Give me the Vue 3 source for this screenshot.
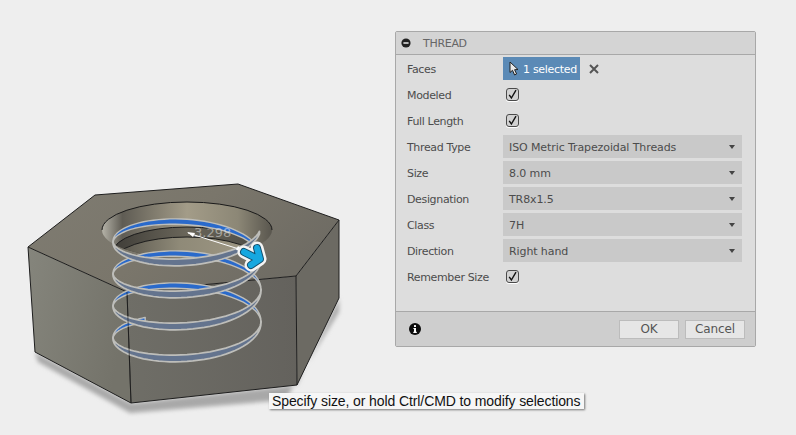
<template>
  <div class="page">
    <svg class="viewport" width="796" height="435" viewBox="0 0 796 435">
      <defs>
        <filter id="soft" x="-20%" y="-20%" width="140%" height="140%">
          <feGaussianBlur stdDeviation="2" />
        </filter>
        <linearGradient id="topFace" x1="0" y1="0" x2="1" y2="0.4">
          <stop offset="0" stop-color="#7f7c72" />
          <stop offset="0.55" stop-color="#7a766b" />
          <stop offset="1" stop-color="#6f6c64" />
        </linearGradient>
        <linearGradient id="leftFace" x1="0" y1="0" x2="1" y2="0.3">
          <stop offset="0" stop-color="#85857c" />
          <stop offset="1" stop-color="#74736a" />
        </linearGradient>
        <linearGradient id="frontFace" x1="0" y1="0" x2="1" y2="0">
          <stop offset="0" stop-color="#6f6e67" />
          <stop offset="1" stop-color="#64625d" />
        </linearGradient>
        <linearGradient id="holeWall" x1="0" y1="0" x2="1" y2="0">
          <stop offset="0" stop-color="#b5b3a8" />
          <stop offset="0.12" stop-color="#5f5c54" />
          <stop offset="0.5" stop-color="#a39c88" />
          <stop offset="0.8" stop-color="#8c8776" />
          <stop offset="1" stop-color="#59564e" />
        </linearGradient>
        <linearGradient id="holeDark" x1="0" y1="0" x2="1" y2="0">
          <stop offset="0" stop-color="#3f3d38" />
          <stop offset="0.5" stop-color="#6a665a" />
          <stop offset="1" stop-color="#4c4a44" />
        </linearGradient>
        <linearGradient id="holeLow" x1="0" y1="0" x2="1" y2="0">
          <stop offset="0" stop-color="#55524a" />
          <stop offset="0.45" stop-color="#8f8a78" />
          <stop offset="1" stop-color="#a09985" />
        </linearGradient>
        <clipPath id="holeClip">
          <ellipse cx="187" cy="230" rx="85" ry="28" />
        </clipPath>
      </defs>

      <path
        d="M35 352 L38 362 L130 413 L285 400 L339 312 L339 298 L297 385 L131 403 Z"
        fill="#a8a8a8"
        filter="url(#soft)"
      />

      <polygon
        points="28,247 95,195 238,184 339,220 296,276 127,292"
        fill="url(#topFace)"
      />
      <polygon points="28,247 127,292 131,403 35,352" fill="url(#leftFace)" />
      <polygon points="127,292 296,276 297,385 131,403" fill="url(#frontFace)" />
      <polygon points="296,276 339,220 339,298 297,385" fill="#6c6a63" />

      <ellipse cx="187" cy="230" rx="85" ry="28" fill="url(#holeWall)" />
      <g clip-path="url(#holeClip)">
        <ellipse cx="187" cy="252" rx="74" ry="25" fill="url(#holeDark)" stroke="#1c1c1c" />
        <ellipse cx="187" cy="262" rx="74" ry="25" fill="url(#holeLow)" stroke="#1c1c1c" />
      </g>
      <path
        d="M102 230 A85 28 0 0 1 272 230"
        fill="none"
        stroke="#1a1a1a"
      />

      <g fill="none" stroke="#1e1e1e" stroke-width="1" stroke-linejoin="round">
        <path d="M28 247 L95 195 L238 184 L339 220 L339 298 L297 385 L131 403 L35 352 Z" />
        <path d="M28 247 L127 292 L296 276 L339 220" />
        <path d="M127 292 L131 403 M296 276 L297 385" />
      </g>

      <polygon
        v-for="(part, i) in ribbonBack"
        :key="'b' + i"
        :points="part"
        class="ribbon-back"
      />
      <polygon
        v-for="(part, i) in ribbonFront"
        :key="'f' + i"
        :points="part"
        class="ribbon-front"
      />

      <path d="M127 292 L131 403" stroke="#1e1e1e" stroke-opacity="0.6" fill="none" />

      <text x="194" y="237" class="dimension">3.298</text>
      <path d="M188 233 L242 250" stroke="#fff" stroke-width="1" fill="none" />
      <path d="M187 232 L195 233 L193 237 Z M244 251 L236 250 L238 246 Z" fill="#fff" />

      <g fill="none" stroke-linecap="round" stroke-linejoin="round">
        <path d="M244 252 L256 258 M257 248 L260 259 L251 265" stroke="#f4f4f4" stroke-width="13" />
        <path d="M244 252 L256 258 M257 248 L260 259 L251 265" stroke="#14506e" stroke-width="8" />
        <path d="M244 252 L256 258 M257 248 L260 259 L251 265" stroke="#16a8e0" stroke-width="6" />
      </g>
    </svg>

    <div class="dialog">
      <div class="dialog-header">
        <svg width="10" height="10" viewBox="0 0 10 10">
          <circle cx="5" cy="5" r="4.6" fill="#222" />
          <rect x="2.4" y="4.2" width="5.2" height="1.6" fill="#ddd" />
        </svg>
        <span>THREAD</span>
      </div>

      <div class="dialog-body">
        <div class="row">
          <label>Faces</label>
          <div class="selected">
            <svg width="10" height="15" viewBox="0 0 10 15">
              <path
                d="M1 1 L1 11.5 L3.5 9.3 L5.6 14 L7.6 13 L5.6 8.7 L9 8.5 Z"
                fill="#e8e8e8"
                stroke="#222"
                stroke-width="1"
              />
            </svg>
            <span>1 selected</span>
          </div>
          <svg class="clear" width="10" height="10" viewBox="0 0 10 10">
            <path d="M1 1 L9 9 M9 1 L1 9" stroke="#555" stroke-width="2" />
          </svg>
        </div>

        <template v-for="row in rows" :key="row.label">
          <div class="row">
            <label>{{ row.label }}</label>
            <div v-if="row.value" class="select">
              <span>{{ row.value }}</span>
              <i class="caret"></i>
            </div>
            <div v-else class="check">
              <svg width="11" height="11" viewBox="0 0 11 11">
                <path d="M2.2 5.8 L4.4 9 L9 1.2" fill="none" stroke="#111" stroke-width="1.4" />
              </svg>
            </div>
          </div>
        </template>
      </div>

      <div class="dialog-footer">
        <svg width="12" height="12" viewBox="0 0 12 12">
          <circle cx="6" cy="6" r="6" fill="#0c0c0c" />
          <rect x="5" y="2.1" width="2" height="1.9" fill="#fff" />
          <path d="M4.4 5 H7 V8.8 H7.8 V10 H4.3 V8.8 H5 V6.1 H4.4 Z" fill="#fff" />
        </svg>
        <div class="buttons">
          <button>OK</button>
          <button>Cancel</button>
        </div>
      </div>
    </div>

    <div class="tooltip">Specify size, or hold Ctrl/CMD to modify selections</div>
  </div>
</template>

<script setup>
const rows = [
  { label: "Modeled" },
  { label: "Full Length" },
  { label: "Thread Type", value: "ISO Metric Trapezoidal Threads" },
  { label: "Size", value: "8.0 mm" },
  { label: "Designation", value: "TR8x1.5" },
  { label: "Class", value: "7H" },
  { label: "Direction", value: "Right hand" },
  { label: "Remember Size" },
];

// helix of the thread preview
const cx = 187;
const rx = 74;
const ry = 28;
const cy = 226;
const pitch = 32;
const start = 0.2;
const end = 7 * Math.PI + 0.97;

const ribbon = (from, to, front) => {
  const upper = [];
  const lower = [];
  const steps = 40;
  for (let i = 0; i <= steps; i++) {
    const t = from + ((to - from) * i) / steps;
    const s = Math.abs(Math.sin(t));
    const h = front ? 0.8 + 2.6 * s : 0.8 + 1.9 * s;
    const x = (cx + rx * Math.cos(t)).toFixed(1);
    const y = cy + ry * Math.sin(t) + (pitch * t) / (2 * Math.PI);
    upper.push(`${x},${(y - h).toFixed(1)}`);
    lower.unshift(`${x},${(y + h).toFixed(1)}`);
  }
  return [...upper, ...lower].join(" ");
};

const ribbonFront = [];
const ribbonBack = [];
for (let k = 0; k < 4; k++) {
  const base = 2 * Math.PI * k;
  ribbonFront.push(ribbon(Math.max(base, start), base + Math.PI, true));
  ribbonBack.push(ribbon(base + Math.PI, Math.min(base + 2 * Math.PI, end), false));
}
</script>

<style scoped>
.page {
  position: relative;
  width: 796px;
  height: 435px;
  overflow: hidden;
  background: #eeeeee;
  font-family: "DejaVu Sans", sans-serif;
  font-size: 11px;
  color: #4c4c4c;
}

.viewport {
  position: absolute;
  left: 0;
  top: 0;
}

.ribbon-back {
  fill: #2a6acb;
  stroke: #bebeba;
  stroke-width: 1.4;
  stroke-linejoin: round;
}

.ribbon-front {
  fill: #64748e;
  stroke: #bebeba;
  stroke-width: 1.7;
  stroke-linejoin: round;
}

.dimension {
  font-family: "DejaVu Sans", sans-serif;
  font-size: 13px;
  fill: #ffffff;
  fill-opacity: 0.45;
}

.dialog {
  position: absolute;
  left: 395px;
  top: 31px;
  width: 361px;
  height: 316px;
  box-sizing: border-box;
  display: flex;
  flex-direction: column;
  background: #dddddd;
  border: 1px solid #a8a8a8;
  border-radius: 2px;
}

.dialog-header {
  height: 23px;
  box-sizing: border-box;
  flex: none;
  display: flex;
  align-items: center;
  gap: 12px;
  padding-left: 5px;
  letter-spacing: -0.3px;
  background: #d4d4d4;
  border-bottom: 1px solid #a8a8a8;
  color: #666;
}

.dialog-body {
  flex: 1;
  display: flex;
  flex-direction: column;
  gap: 3px;
  padding: 2px 13px 0 11px;
}

.row {
  height: 23px;
  display: flex;
  align-items: center;
}

.row label {
  width: 96px;
  flex: none;
  padding-top: 2px;
  letter-spacing: -0.35px;
}

.selected {
  width: 77px;
  height: 23px;
  box-sizing: border-box;
  display: flex;
  align-items: center;
  gap: 4px;
  padding-left: 6px;
  background: #5b8ab6;
  color: #fff;
  letter-spacing: -0.3px;
}

.selected span {
  padding-top: 2px;
}

.clear {
  margin-left: 9px;
}

.select {
  flex: 1;
  height: 23px;
  display: flex;
  align-items: center;
  justify-content: space-between;
  padding: 0 7px 0 6px;
  background: #c9c9c9;
  letter-spacing: -0.1px;
}

.select span {
  padding-top: 2px;
}

.caret {
  width: 0;
  height: 0;
  border-left: 3.5px solid transparent;
  border-right: 3.5px solid transparent;
  border-top: 4px solid #444;
}

.check {
  width: 13px;
  height: 13px;
  box-sizing: border-box;
  margin-left: 3px;
  display: flex;
  align-items: center;
  justify-content: center;
  background: #d2d2d2;
  border: 1px solid #4a4a4a;
  border-radius: 3px;
  box-shadow: 0 1px 0 #fff;
}

.dialog-footer {
  height: 35px;
  box-sizing: border-box;
  flex: none;
  display: flex;
  align-items: center;
  justify-content: space-between;
  padding: 0 10px 0 13px;
  background: #cecece;
  border-top: 1px solid #a8a8a8;
}

.buttons {
  display: flex;
  gap: 6px;
}

.buttons button {
  width: 60px;
  height: 19px;
  padding: 0;
  font-family: inherit;
  font-size: 12px;
  letter-spacing: -0.1px;
  color: #555;
  background: #e6e6e6;
  border: 1px solid #bcbcbc;
}

.tooltip {
  position: absolute;
  left: 269px;
  top: 393px;
  width: 315px;
  height: 16px;
  box-sizing: border-box;
  padding-left: 3px;
  font-family: "Liberation Sans", sans-serif;
  font-size: 14px;
  letter-spacing: -0.1px;
  line-height: 16px;
  color: #111;
  white-space: nowrap;
  background: #f6f6f6;
  box-shadow: 1px 1px 2px #777;
}
</style>
